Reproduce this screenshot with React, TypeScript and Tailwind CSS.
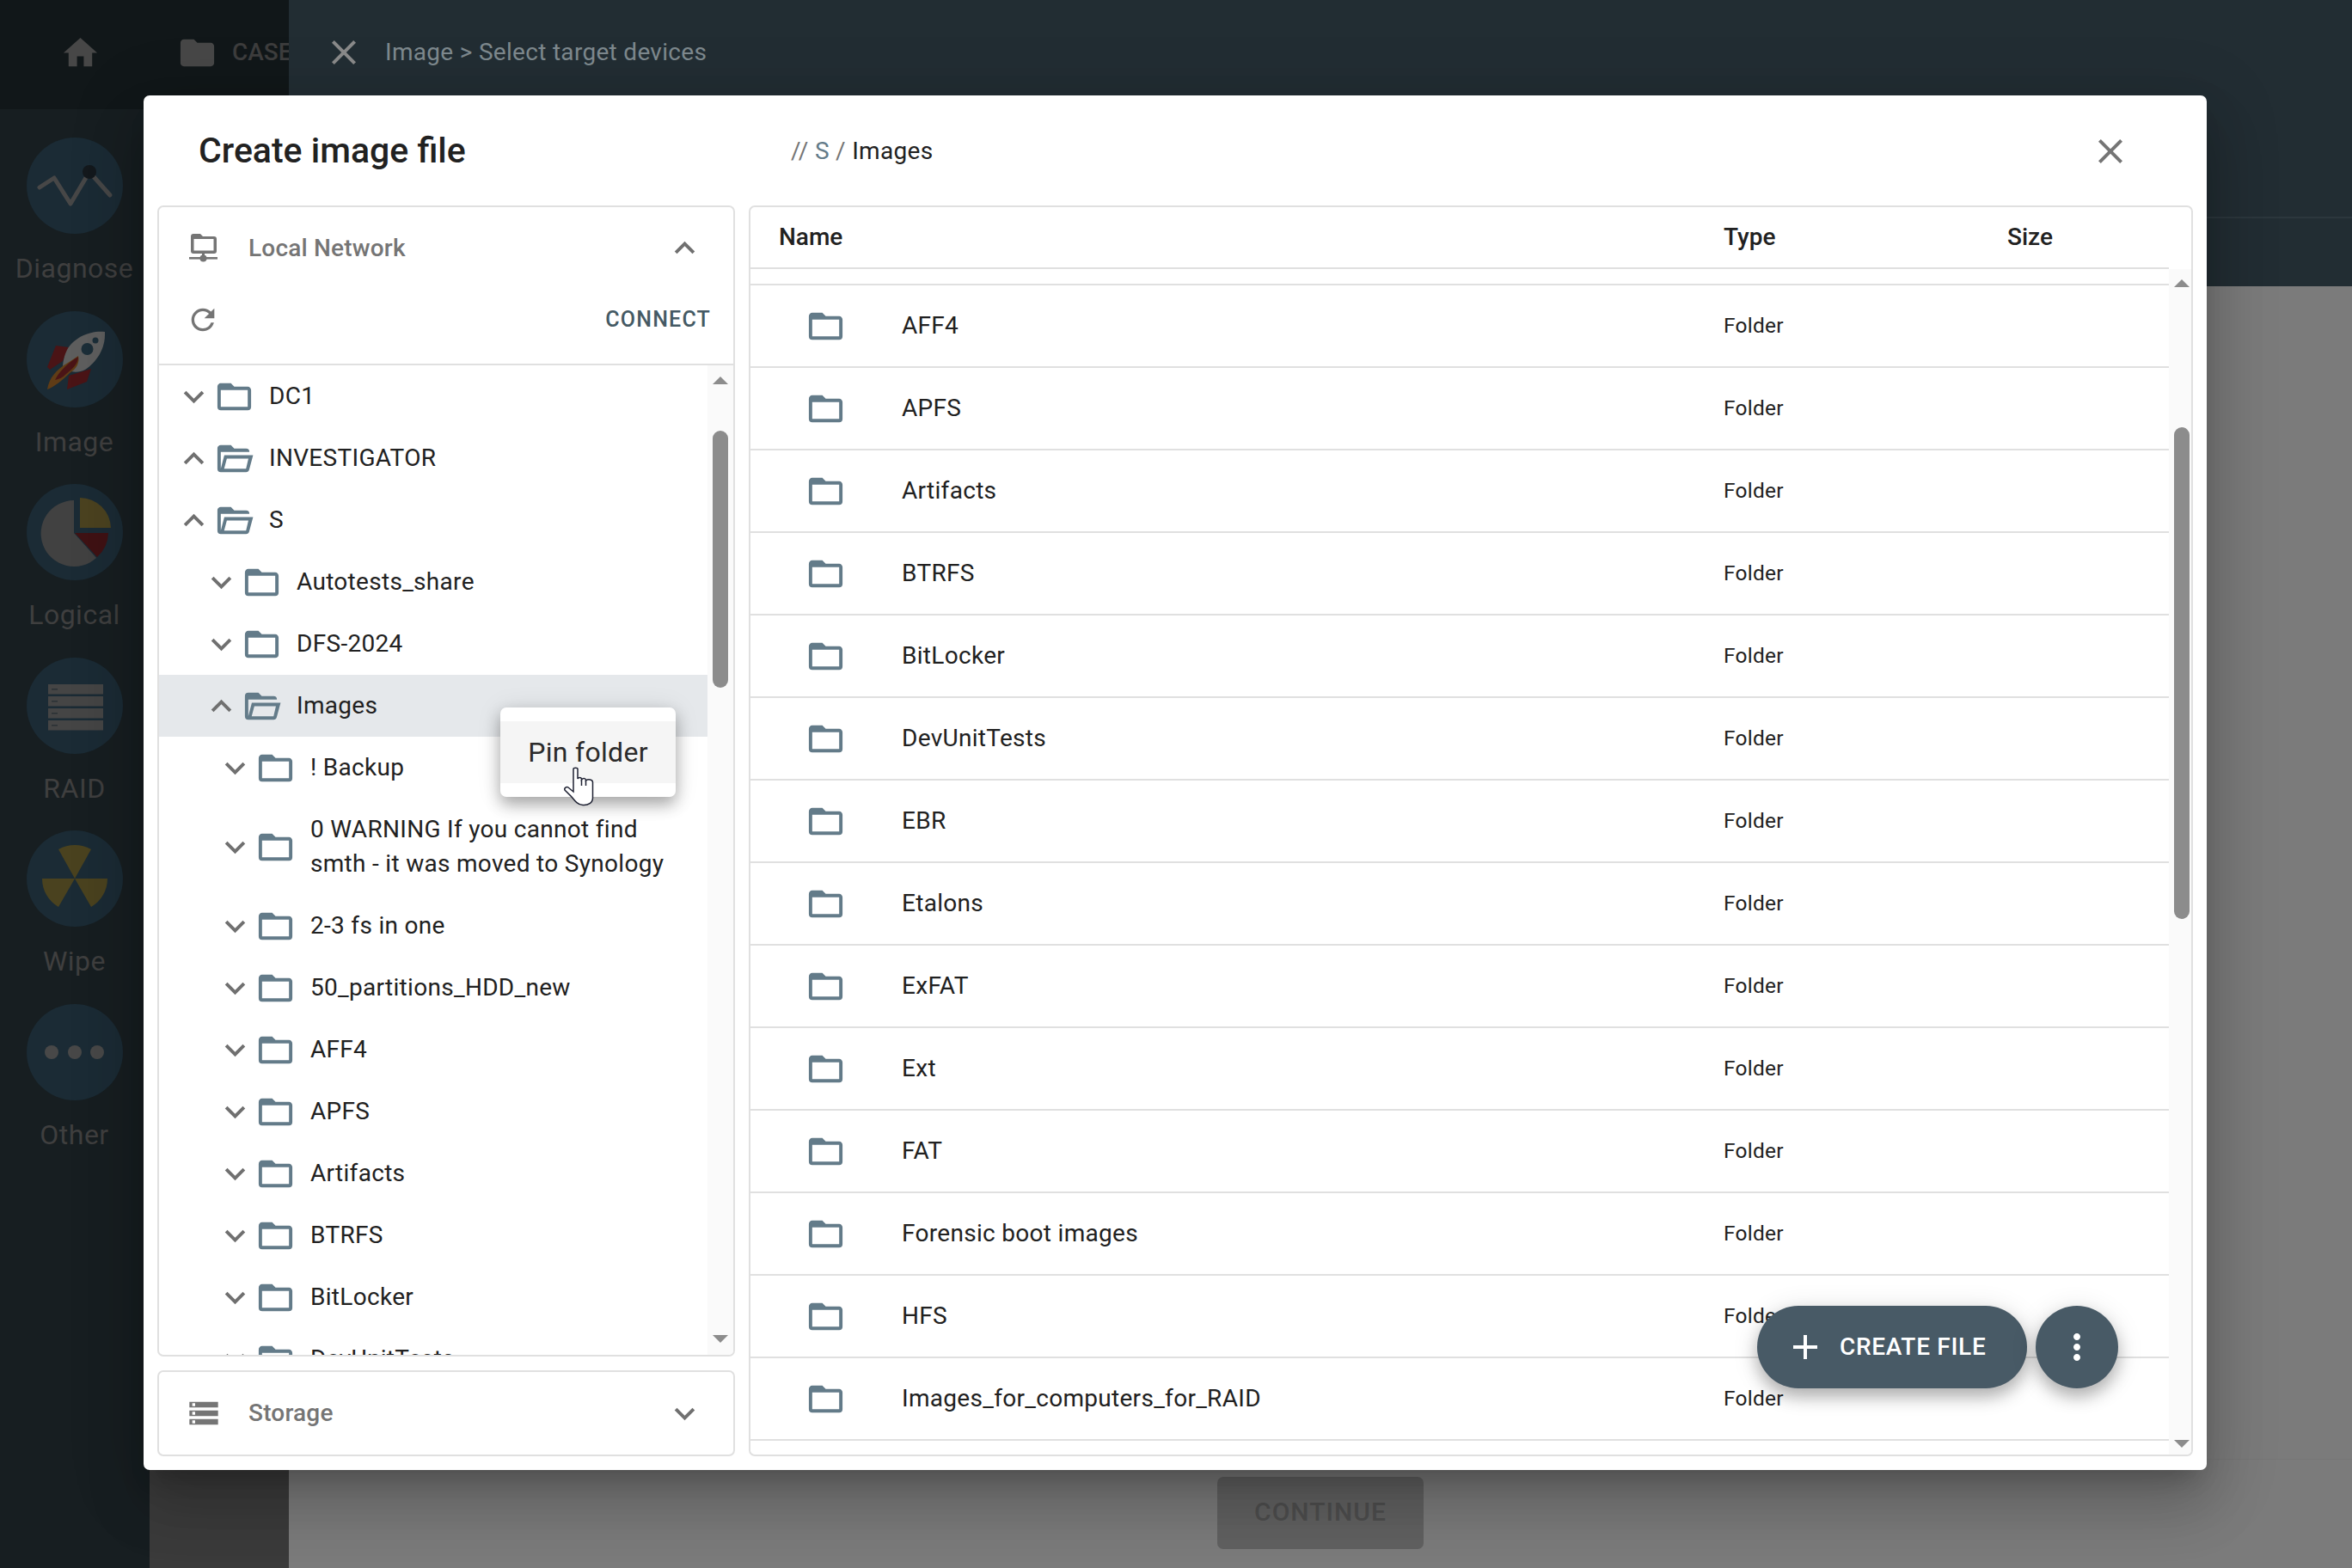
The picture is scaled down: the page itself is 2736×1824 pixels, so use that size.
import { MdAdd, MdClose, MdExpandLess, MdExpandMore, MdFolder, MdHome, MdMoreVert, MdRefresh, MdStorage } from "react-icons/md";

const FOLDER = "M20,18H4V8H20M20,6H12L10,4H4C2.89,4 2,4.89 2,6V18A2,2 0 0,0 4,20H20A2,2 0 0,0 22,18V8C22,6.89 21.1,6 20,6Z";
const FOLDER_OPEN = "M6.1,10L4,18V8H21A2,2 0 0,0 19,6H12L10,4H4A2,2 0 0,0 2,6V18A2,2 0 0,0 4,20H19C19.9,20 20.7,19.4 20.9,18.5L23.2,10H6.1M19,18H6L7.6,12H20.4L19,18Z";

function FolderIcon({ open = false }: { open?: boolean }) {
  return (
    <svg viewBox="0 0 24 24" className="h-[47px] w-[47px] shrink-0 fill-[#637b89]">
      <path d={open ? FOLDER_OPEN : FOLDER} />
    </svg>
  );
}

const tree = [
  { name: "DC1", level: 0 },
  { name: "INVESTIGATOR", level: 0, open: true },
  { name: "S", level: 0, open: true },
  { name: "Autotests_share", level: 1 },
  { name: "DFS-2024", level: 1 },
  { name: "Images", level: 1, open: true, selected: true },
  { name: "! Backup", level: 2 },
  { name: "0 WARNING If you cannot find smth - it was moved to Synology", level: 2 },
  { name: "2-3 fs in one", level: 2 },
  { name: "50_partitions_HDD_new", level: 2 },
  { name: "AFF4", level: 2 },
  { name: "APFS", level: 2 },
  { name: "Artifacts", level: 2 },
  { name: "BTRFS", level: 2 },
  { name: "BitLocker", level: 2 },
  { name: "DevUnitTests", level: 2 },
];

const files = [
  "AFF4",
  "APFS",
  "Artifacts",
  "BTRFS",
  "BitLocker",
  "DevUnitTests",
  "EBR",
  "Etalons",
  "ExFAT",
  "Ext",
  "FAT",
  "Forensic boot images",
  "HFS",
  "Images_for_computers_for_RAID",
];

const levelPadding = ["pl-[17px]", "pl-[49px]", "pl-[65px]"];

function TreeRow({ name, level, open, selected }: { name: string; level: number; open?: boolean; selected?: boolean }) {
  return (
    <div className={`flex shrink-0 items-center ${levelPadding[level]} ${selected ? "bg-[#e5e8eb]" : ""}`}>
      {open ? <MdExpandLess size={47} className="shrink-0 text-[#707070]" /> : <MdExpandMore size={47} className="shrink-0 text-[#707070]" />}
      <FolderIcon open={open} />
      <span className="ml-[17px] max-w-[420px] py-[16px] text-[28px] leading-[40px] tracking-[0.3px] text-[#212121]">{name}</span>
    </div>
  );
}

function Scrollbar({ width, thumbTop, thumbHeight, top, bottom, left }: { width: string; thumbTop: string; thumbHeight: string; top: string; bottom: string; left: string }) {
  return (
    <div className={`flex shrink-0 flex-col items-center bg-[#fafafa] ${width} ${top} ${bottom} ${left}`}>
      <div className="h-0 w-0 border-x-[9px] border-b-[9px] border-x-transparent border-b-[#8c8c8c]" />
      <div className={`w-[18px] rounded-full bg-[#8c8c8c] ${thumbTop} ${thumbHeight}`} />
      <div className="mt-auto h-0 w-0 border-x-[9px] border-t-[9px] border-x-transparent border-t-[#8c8c8c]" />
    </div>
  );
}

function SideItem({ label, children }: { label: string; children: React.ReactNode }) {
  return (
    <div className="flex h-[201.6px] shrink-0 flex-col items-center">
      <svg viewBox="0 0 112 112" className="h-[112px] w-[112px] shrink-0">
        <circle cx="56" cy="56" r="56" fill="#1b2b35" />
        {children}
      </svg>
      <span className="-ml-[1px] mt-[20px] text-[32px] leading-[40px] tracking-[0.5px] text-[#3f3f3f]">{label}</span>
    </div>
  );
}

function Sidebar() {
  return (
    <div className="flex w-[174px] shrink-0 flex-col bg-[#171e21] pt-[33px]">
      <SideItem label="Diagnose">
        <polyline points="15,58 32,47 51,77 73,40 97,67" fill="none" stroke="#474747" strokeWidth="5" strokeLinecap="round" strokeLinejoin="round" />
        <circle cx="73" cy="40" r="8" fill="#14191d" />
      </SideItem>
      <SideItem label="Image">
        <path d="M34 40L49 42L42 58L27 68L24 65Z" fill="#4a1416" />
        <path d="M75 67L70 82L47 91L49 75Z" fill="#4a1416" />
        <path d="M91 24C75 22 55 30 47 45C42 55 42 65 42 65C50 72 60 72 68 68C80 60 92 45 91 24Z" fill="#5e5e5e" />
        <path d="M24 91C26 78 34 68 48 60L60 52C62 60 58 67 50 72C42 80 32 88 24 91Z" fill="#5f3c16" />
        <path d="M33 80C38 70 48 60 60 53C60 62 52 68 46 73C42 77 38 79 33 80Z" fill="#4a1416" />
        <circle cx="70.5" cy="44" r="7" fill="#1c2e38" />
        <circle cx="80" cy="34" r="3.5" fill="#1c2e38" />
      </SideItem>
      <SideItem label="Logical">
        <path d="M55 57L55 19A38.5 38.5 0 1 0 81 86Z" fill="#414141" />
        <path d="M56 57H95A39 39 0 0 1 82 85Z" fill="#3f1214" />
        <path d="M62 16A36 36 0 0 1 98 51H62Z" fill="#4b4220" />
      </SideItem>
      <SideItem label="RAID">
        <rect x="25" y="31" width="64" height="11.5" fill="#454545" />
        <rect x="25" y="45" width="64" height="11.5" fill="#454545" />
        <rect x="25" y="59" width="64" height="11.5" fill="#454545" />
        <rect x="25" y="73" width="64" height="11.5" fill="#454545" />
        <rect x="29" y="36" width="7" height="1.5" fill="#2a3135" />
        <rect x="29" y="50" width="7" height="1.5" fill="#2a3135" />
        <rect x="29" y="64" width="7" height="1.5" fill="#2a3135" />
        <rect x="29" y="78" width="7" height="1.5" fill="#2a3135" />
      </SideItem>
      <SideItem label="Wipe">
        <path d="M56 56L37 22A38 38 0 0 1 75 22Z" fill="#4a421f" />
        <path d="M56 56H18A38 38 0 0 0 37 89Z" fill="#4a421f" />
        <path d="M56 56H94A38 38 0 0 1 75 89Z" fill="#4a421f" />
      </SideItem>
      <SideItem label="Other">
        <circle cx="29" cy="56" r="8" fill="#484848" />
        <circle cx="56" cy="56" r="8" fill="#484848" />
        <circle cx="82" cy="56" r="8" fill="#484848" />
      </SideItem>
    </div>
  );
}

function Background() {
  return (
    <div className="flex h-full w-full">
      <div className="flex w-[336px] shrink-0 flex-col overflow-hidden bg-[#3b3b3b]">
        <div className="flex h-[127px] shrink-0 items-center whitespace-nowrap bg-[#111719] pb-[5px] pl-[70px]">
          <MdHome size={47} className="shrink-0 text-[#474747]" />
          <MdFolder size={47} className="ml-[89px] shrink-0 text-[#474747]" />
          <span className="ml-[17px] text-[28px] font-medium text-[#3d3d3d]">CASES</span>
        </div>
        <div className="flex min-h-0 flex-1">
          <Sidebar />
        </div>
      </div>
      <div className="flex min-w-0 flex-1 flex-col bg-[#7b7b7b]">
        <div className="flex h-[333px] shrink-0 flex-col bg-[#222d33]">
          <div className="flex h-[121px] shrink-0 items-center pl-[40px]">
            <MdClose size={48} className="text-[#8a8a8a]" />
            <span className="ml-[24px] text-[28px] tracking-[0.3px] text-[#7e898e]">Image &gt; Select target devices</span>
          </div>
          <div className="mt-[131px] h-[2px] bg-[#2c373d]" />
        </div>
        <div className="flex-1" />
        <div className="flex h-[127px] shrink-0 justify-center border-t border-[#777777] pt-[20px]">
          <div className="flex h-[84px] w-[240px] items-center justify-center rounded-[7px] bg-[#616161] pb-[3px] text-[30px] font-medium tracking-[1px] text-[#4e4e4e]">
            CONTINUE
          </div>
        </div>
      </div>
    </div>
  );
}

function NetworkIcon() {
  return (
    <svg viewBox="0 0 33 33" className="h-[33px] w-[33px] shrink-0 fill-[#757575]">
      <path fillRule="evenodd" d="M5 0h8l3 3h13a3 3 0 0 1 3 3v14a3 3 0 0 1-3 3H5a3 3 0 0 1-3-3V3a3 3 0 0 1 3-3zM5.5 6v13.5h23V6z" />
      <rect x="15" y="22" width="3" height="6" />
      <rect x="0" y="27" width="33" height="2.6" />
      <circle cx="16.5" cy="28.5" r="4" />
    </svg>
  );
}

function LeftColumn() {
  return (
    <div className="flex w-[672px] shrink-0 flex-col gap-[16px]">
      <div className="flex min-h-0 flex-1 flex-col overflow-hidden rounded-[7px] border-2 border-[#e0e0e0]">
        <div className="flex h-[94px] shrink-0 items-center pl-[35px] pr-[33px] pt-[1px]">
          <NetworkIcon />
          <span className="ml-[36px] flex-1 text-[28px] font-medium tracking-[0.2px] text-[#757575]">Local Network</span>
          <MdExpandLess size={47} className="text-[#707070]" />
        </div>
        <div className="flex h-[90px] shrink-0 items-center border-b-2 border-[#e0e0e0] pb-[14px] pl-[31px] pr-[26px]">
          <MdRefresh size={40} className="text-[#757575]" />
          <span className="ml-auto text-[25px] font-medium tracking-[1.2px] text-[#455a64]">CONNECT</span>
        </div>
        <div className="flex min-h-0 flex-1">
          <div className="flex min-w-0 flex-1 flex-col overflow-hidden">
            {tree.map((row) => (
              <TreeRow key={row.name} {...row} />
            ))}
          </div>
          <Scrollbar width="w-[30px]" top="pt-[13px]" bottom="pb-[14px]" left="pl-[0px]" thumbTop="mt-[54px]" thumbHeight="h-[299px]" />
        </div>
      </div>
      <div className="flex h-[100px] shrink-0 items-center rounded-[7px] border-2 border-[#e0e0e0] pl-[32px] pr-[33px]">
        <MdStorage size={40} className="shrink-0 text-[#757575]" />
        <span className="ml-[32px] flex-1 text-[28px] font-medium tracking-[0.2px] text-[#757575]">Storage</span>
        <MdExpandMore size={47} className="text-[#707070]" />
      </div>
    </div>
  );
}

function RightPanel() {
  return (
    <div className="flex min-w-0 flex-1 flex-col overflow-hidden rounded-[7px] border-2 border-[#e0e0e0]">
      <div className="mr-[26px] grid h-[72px] shrink-0 grid-cols-[1099px_330px_1fr] items-center border-b-2 border-[#e0e0e0] pl-[33px] text-[28px] font-medium text-[#212121]">
        <span>Name</span>
        <span>Type</span>
        <span>Size</span>
      </div>
      <div className="flex min-h-0 flex-1">
        <div className="mt-[17px] flex min-w-0 flex-1 flex-col">
          {files.map((name) => (
            <div key={name} className="grid h-[96px] shrink-0 grid-cols-[1132px_1fr] items-center border-t-2 border-[#e0e0e0]">
              <div className="flex items-center pl-[64px]">
                <FolderIcon />
                <span className="ml-[65px] text-[28px] tracking-[0.3px] text-[#212121]">{name}</span>
              </div>
              <span className="text-[24.5px] tracking-[0.26px] text-[#212121]">Folder</span>
            </div>
          ))}
          <div className="border-t-2 border-[#e0e0e0]" />
        </div>
        <Scrollbar width="w-[26px]" top="pt-[12px]" bottom="pb-[8px]" left="pl-[4px]" thumbTop="mt-[163px]" thumbHeight="h-[572px]" />
      </div>
    </div>
  );
}

function PinMenu() {
  return (
    <div className="absolute left-[415px] top-[712px] w-[204px] rounded-[7px] bg-white py-[16px] shadow-[0_9px_18px_rgba(0,0,0,0.3),0_2px_30px_rgba(0,0,0,0.1)]">
      <div className="flex h-[72px] items-center justify-center bg-[#f5f5f5] text-[32px] tracking-[0.3px] text-[#2b2b2b]">Pin folder</div>
      <svg viewBox="0 0 35 46" className="absolute left-[74px] top-[69px] h-[46px] w-[35px]">
        <path
          d="M11 2.5C11 0.8 16 0.8 16 2.5L16 14C17 12 20 12 20.5 14L20.5 15C22 13 25 13 25.5 15.5L25.5 16C28 14 33.5 14.5 33.5 18L33.5 36C33.5 42 28 45 22 44.5C16 44 13 40 9 35L1 27C0 25 3 22.5 5 24L11 29Z"
          fill="#ffffff"
          stroke="#1f2233"
          strokeWidth="1.5"
        />
        <path d="M20.5 15V22M25.5 16V22" fill="none" stroke="#1f2233" strokeWidth="1.5" />
      </svg>
    </div>
  );
}

function Fabs() {
  const shadow = "shadow-[0_10px_18px_rgba(0,0,0,0.25),0_4px_32px_rgba(0,0,0,0.12)]";
  return (
    <div className="absolute left-[1877px] top-[1408px] flex gap-[10px]">
      <div className={`flex h-[96px] w-[314px] items-center rounded-full bg-[#485a66] pl-[32px] text-white ${shadow}`}>
        <MdAdd size={48} />
        <span className="ml-[16px] text-[28px] font-medium tracking-[0.7px]">CREATE FILE</span>
      </div>
      <div className={`flex h-[96px] w-[96px] items-center justify-center rounded-full bg-[#485a66] text-white ${shadow}`}>
        <MdMoreVert size={48} />
      </div>
    </div>
  );
}

export default function App() {
  return (
    <div className="relative h-[1824px] w-[2736px] overflow-hidden font-['Roboto',sans-serif]">
      <Background />
      <div className="absolute left-[167px] top-[111px] flex h-[1599px] w-[2400px] flex-col rounded-[7px] bg-white px-[16px] pb-[16px] shadow-[0_19px_26px_-12px_rgba(0,0,0,0.2),0_42px_66px_5px_rgba(0,0,0,0.14),0_16px_80px_14px_rgba(0,0,0,0.12)]">
        <div className="flex h-[128px] shrink-0 items-center pt-[1px]">
          <h1 className="ml-[48px] w-[689px] text-[41px] font-medium text-[#212121]">Create image file</h1>
          <div className="flex-1 text-[28px] tracking-[0.3px] text-[#757575]">
            // <span className="text-[#637b89]">S</span> / <span className="text-[#212121]">Images</span>
          </div>
          <MdClose size={48} className="mr-[72px] text-[#757575]" />
        </div>
        <div className="flex min-h-0 flex-1 gap-[16px]">
          <LeftColumn />
          <RightPanel />
        </div>
        <PinMenu />
        <Fabs />
      </div>
    </div>
  );
}
